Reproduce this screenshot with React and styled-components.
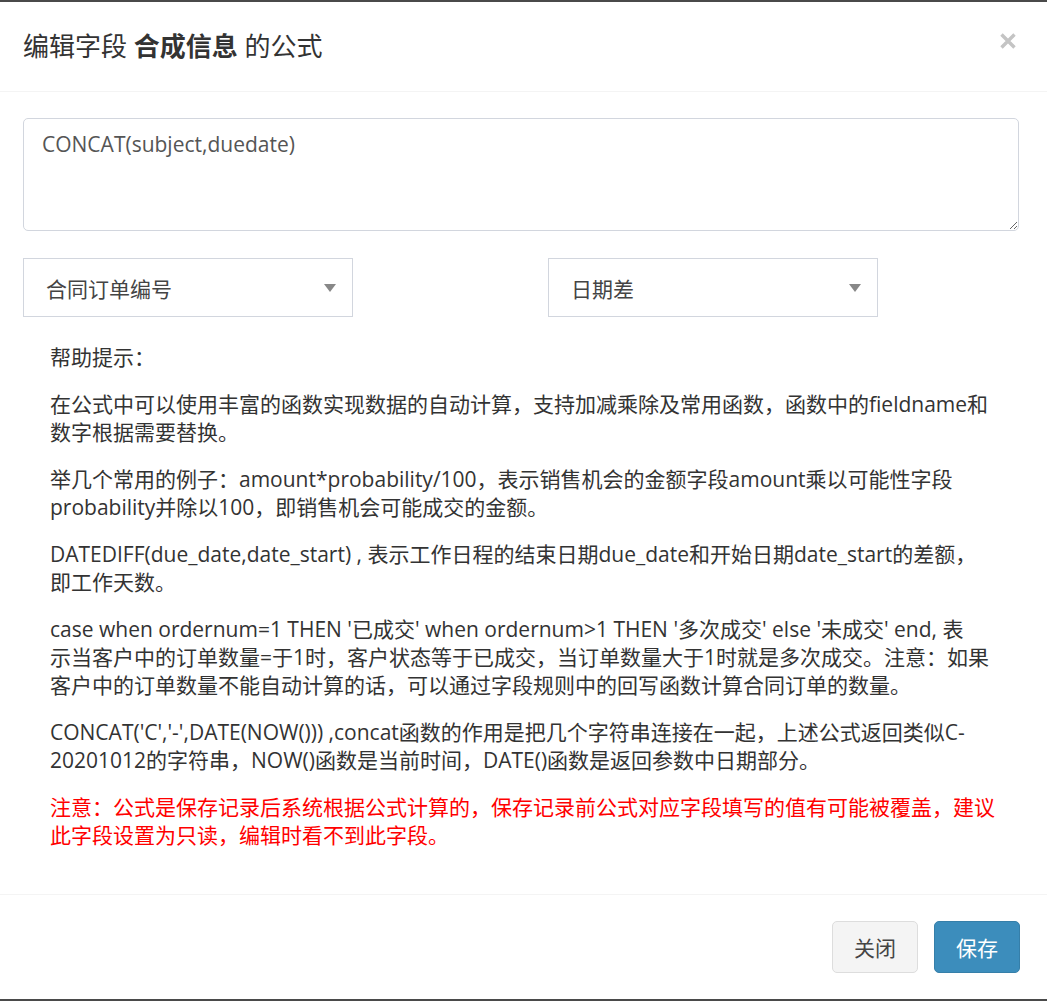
import React, { useState } from 'react';
import styled, { createGlobalStyle } from 'styled-components';

const GlobalStyle = createGlobalStyle`
  html, body {
    margin: 0;
    padding: 0;
    background: #fff;
  }
  body {
    font-family: "Open Sans", "Noto Sans CJK SC", sans-serif;
    color: #333;
  }
  * {
    box-sizing: border-box;
  }
`;

const Modal = styled.div`
  width: 1047px;
  background: #fff;
  border-top: 2px solid #4a4a4a;
  border-bottom: 2px solid #4a4a4a;
`;

const Header = styled.div`
  display: flex;
  align-items: center;
  justify-content: space-between;
  padding: 27px 31px 27px 23px;
  border-bottom: 1px solid #f4f4f4;
`;

const Title = styled.h4`
  margin: 0;
  font-size: 26px;
  line-height: 35px;
  font-weight: 400;
  color: #333;

  b {
    font-weight: 700;
  }
`;

const CloseButton = styled.button`
  display: flex;
  padding: 0;
  margin: 0 0 12px;
  border: none;
  background: transparent;
  cursor: pointer;
`;

const Body = styled.div`
  padding: 26px 28px 26px 23px;
`;

const FormulaInput = styled.textarea`
  display: block;
  width: 100%;
  height: 113px;
  padding: 11px 18px;
  border: 1px solid #d2d6de;
  border-radius: 5px;
  font-family: "Open Sans", "Noto Sans CJK SC", sans-serif;
  font-size: 21px;
  line-height: 28px;
  color: #555;
  resize: vertical;
  outline: none;
`;

const SelectRow = styled.div`
  display: grid;
  grid-template-columns: 330px 330px;
  column-gap: 195px;
  margin-top: 27px;
`;

const Select = styled.div`
  display: flex;
  align-items: center;
  justify-content: space-between;
  height: 59px;
  padding: 0 16px 0 22px;
  border: 1px solid #d2d6de;
  background: #fff;
  font-size: 21px;
  color: #444;
  cursor: pointer;
`;

const Help = styled.div`
  margin-top: 26px;
  padding-left: 27px;
  padding-right: 8px;
  font-size: 21px;
  line-height: 28px;
  color: #333;
`;

const Para = styled.p`
  margin: 0 0 19px;
  color: ${({ warn }) => (warn ? '#ff0000' : '#333')};
`;

const Footer = styled.div`
  display: flex;
  justify-content: flex-end;
  gap: 16px;
  padding: 26px 27px 26px;
  border-top: 1px solid #f4f4f4;
`;

const Button = styled.button`
  height: 52px;
  padding: 0 21px;
  border: 1px solid ${({ primary }) => (primary ? '#367fa9' : '#ddd')};
  border-radius: 5px;
  background: ${({ primary }) => (primary ? '#3c8dbc' : '#f4f4f4')};
  color: ${({ primary }) => (primary ? '#fff' : '#444')};
  font-family: "Open Sans", "Noto Sans CJK SC", sans-serif;
  font-size: 21px;
  cursor: pointer;
`;

const Caret = () => (
  <svg width="12" height="8" viewBox="0 0 12 8">
    <path d="M0 0 L12 0 L6 8 Z" fill="#888" />
  </svg>
);

const CloseIcon = () => (
  <svg width="16" height="16" viewBox="0 0 16 16">
    <path d="M1.5 1.5 L14.5 14.5 M14.5 1.5 L1.5 14.5" stroke="#c4c4c4" strokeWidth="3.4" />
  </svg>
);

const tips = [
  ['帮助提示：'],
  ['在公式中可以使用丰富的函数实现数据的自动计算，支持加减乘除及常用函数，函数中的fieldname和', '数字根据需要替换。'],
  ['举几个常用的例子：amount*probability/100，表示销售机会的金额字段amount乘以可能性字段', 'probability并除以100，即销售机会可能成交的金额。'],
  ['DATEDIFF(due_date,date_start) , 表示工作日程的结束日期due_date和开始日期date_start的差额，', '即工作天数。'],
  [
    "case when ordernum=1 THEN '已成交' when ordernum>1 THEN '多次成交' else '未成交' end, 表",
    '示当客户中的订单数量=于1时，客户状态等于已成交，当订单数量大于1时就是多次成交。注意：如果',
    '客户中的订单数量不能自动计算的话，可以通过字段规则中的回写函数计算合同订单的数量。',
  ],
  ["CONCAT('C','-',DATE(NOW())) ,concat函数的作用是把几个字符串连接在一起，上述公式返回类似C-", '20201012的字符串，NOW()函数是当前时间，DATE()函数是返回参数中日期部分。'],
];

const warning = ['注意：公式是保存记录后系统根据公式计算的，保存记录前公式对应字段填写的值有可能被覆盖，建议', '此字段设置为只读，编辑时看不到此字段。'];

const Lines = ({ lines }) =>
  lines.map((line, i) => (
    <React.Fragment key={i}>
      {i > 0 && <br />}
      {line}
    </React.Fragment>
  ));

const App = () => {
  const [formula, setFormula] = useState('CONCAT(subject,duedate)');

  return (
    <>
      <GlobalStyle />
      <Modal>
        <Header>
          <Title>编辑字段 <b>合成信息</b> 的公式</Title>
          <CloseButton aria-label="关闭"><CloseIcon /></CloseButton>
        </Header>
        <Body>
          <FormulaInput value={formula} onChange={(e) => setFormula(e.target.value)} />
          <SelectRow>
            <Select>
              <span>合同订单编号</span>
              <Caret />
            </Select>
            <Select>
              <span>日期差</span>
              <Caret />
            </Select>
          </SelectRow>
          <Help>
            {tips.map((lines, i) => (
              <Para key={i}><Lines lines={lines} /></Para>
            ))}
            <Para warn><Lines lines={warning} /></Para>
          </Help>
        </Body>
        <Footer>
          <Button>关闭</Button>
          <Button primary>保存</Button>
        </Footer>
      </Modal>
    </>
  );
};

export default App;
